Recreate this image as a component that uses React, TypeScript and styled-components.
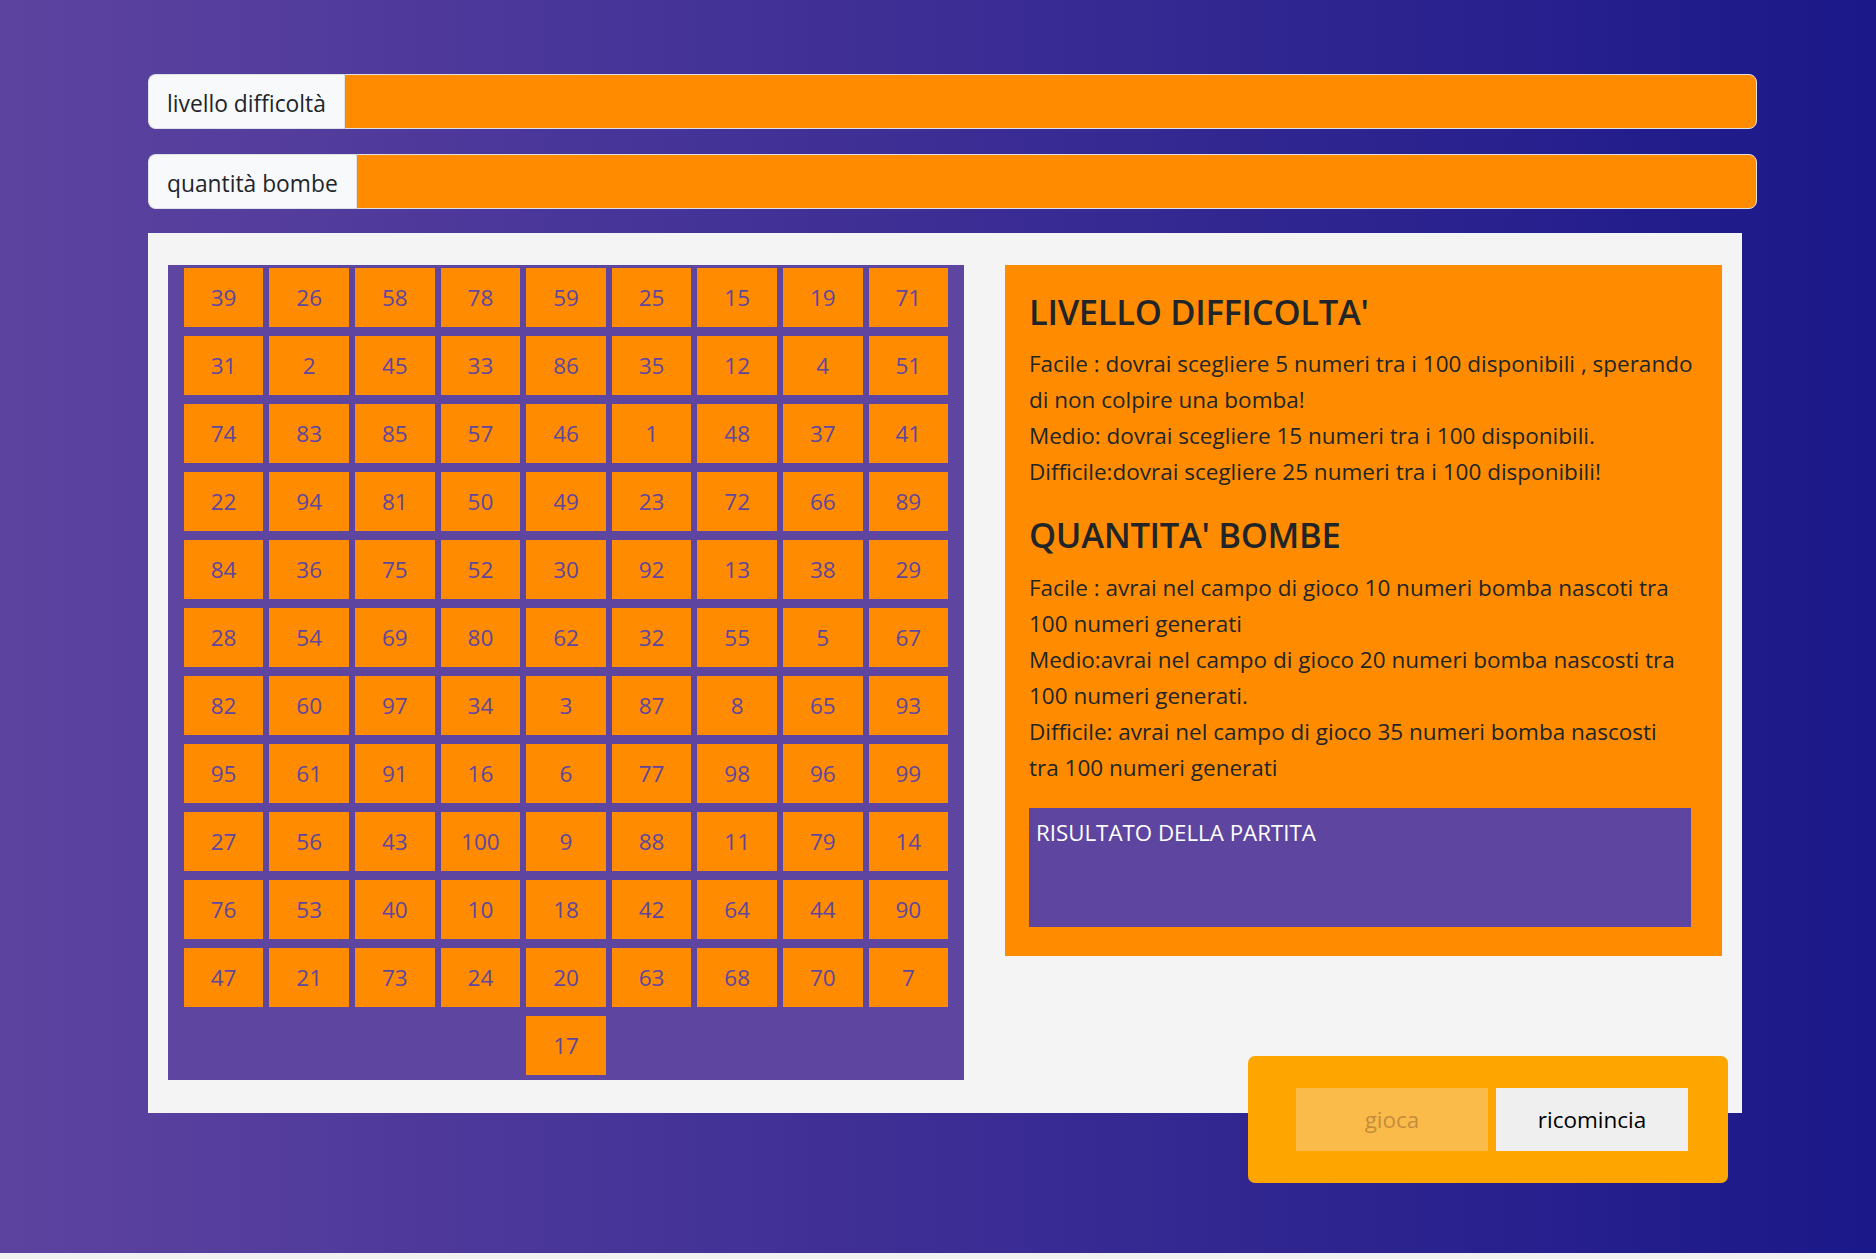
import React from "react";
import styled, { createGlobalStyle } from "styled-components";

const Global = createGlobalStyle`
  html, body { margin: 0; padding: 0; background: #f1f1f1; }
  body { font-family: "Open Sans", "Noto Sans", sans-serif; color: #212529; }
  * { box-sizing: border-box; }
`;

const Page = styled.div`
  min-height: 1253px;
  background: linear-gradient(to right, #5d43a0 0%, #1b1889 100%);
  padding: 74px 0 0 148px;
`;

const Column = styled.div`
  width: 1609px;
  display: flex;
  flex-direction: column;
`;

const InputGroup = styled.div<{ $mb: number }>`
  display: flex;
  height: 55px;
  margin-bottom: ${(p) => p.$mb}px;
`;

const Label = styled.div`
  display: flex;
  align-items: center;
  padding: 4px 18px 0 18px;
  background: #f8f9fa;
  border: 1px solid #dee2e6;
  border-right: none;
  border-radius: 8px 0 0 8px;
  font-size: 22.8px;
  color: #212529;
  white-space: nowrap;
`;

const Select = styled.div`
  flex: 1;
  background: #ff8c00;
  border: 1px solid #dee2e6;
  border-radius: 0 8px 8px 0;
`;

const Board = styled.div`
  width: 1594px;
  background: #f4f4f4;
  padding: 32px 20px 33px 20px;
  display: flex;
  gap: 41px;
  align-items: flex-start;
`;

const Grid = styled.div`
  width: 796px;
  background: #5e46a0;
  display: flex;
  flex-wrap: wrap;
  justify-content: center;
  align-content: flex-start;
  row-gap: 3px;
  padding-bottom: 2px;
`;

const Cell = styled.div`
  width: 10%;
  height: 59px;
  margin: 3px;
  background: #ff8c00;
  color: #5e46a0;
  font-size: 22.5px;
  display: flex;
  align-items: center;
  justify-content: center;
`;

const Info = styled.div`
  width: 717px;
  background: #ff8c00;
  padding: 25.5px 14px 29px 24px;
`;

const Heading = styled.h2<{ $mt?: number }>`
  margin: ${(p) => p.$mt ?? 0}px 0 14px;
  font-size: 34.5px;
  font-weight: 600;
  line-height: 1.2;
  letter-spacing: -0.3px;
  color: #212529;
`;

const Para = styled.div`
  font-size: 22.5px;
  line-height: 36px;
  color: #212529;
`;

const Result = styled.div`
  margin-top: 22px;
  width: 662px;
  height: 119px;
  background: #5e46a0;
  color: #ffffff;
  font-size: 22.3px;
  padding: 9px 7px;
`;

const ControlsRow = styled.div`
  width: 1594px;
  display: flex;
  justify-content: flex-end;
  padding-right: 14px;
  margin-top: -57px;
`;

const Controls = styled.div`
  width: 480px;
  background: #ffa500;
  border-radius: 7px;
  padding: 32px 40px 32px 48px;
  display: flex;
  gap: 8px;
`;

const Button = styled.button<{ $disabled?: boolean }>`
  width: 192px;
  height: 63px;
  border: none;
  font-family: "Open Sans", "Noto Sans", sans-serif;
  font-size: 22.5px;
  background: ${(p) => (p.$disabled ? "#fbbb4b" : "#efefef")};
  color: ${(p) => (p.$disabled ? "#c48d3d" : "#000000")};
  padding: 0;
`;

const numbers = [
  39, 26, 58, 78, 59, 25, 15, 19, 71,
  31, 2, 45, 33, 86, 35, 12, 4, 51,
  74, 83, 85, 57, 46, 1, 48, 37, 41,
  22, 94, 81, 50, 49, 23, 72, 66, 89,
  84, 36, 75, 52, 30, 92, 13, 38, 29,
  28, 54, 69, 80, 62, 32, 55, 5, 67,
  82, 60, 97, 34, 3, 87, 8, 65, 93,
  95, 61, 91, 16, 6, 77, 98, 96, 99,
  27, 56, 43, 100, 9, 88, 11, 79, 14,
  76, 53, 40, 10, 18, 42, 64, 44, 90,
  47, 21, 73, 24, 20, 63, 68, 70, 7,
  17,
];

export default function App() {
  return (
    <>
      <Global />
      <Page>
        <Column>
          <InputGroup $mb={25}>
            <Label>livello difficoltà</Label>
            <Select />
          </InputGroup>
          <InputGroup $mb={24}>
            <Label>quantità bombe</Label>
            <Select />
          </InputGroup>
          <Board>
            <Grid>
              {numbers.map((n) => (
                <Cell key={n}>{n}</Cell>
              ))}
            </Grid>
            <Info>
              <Heading>LIVELLO DIFFICOLTA'</Heading>
              <Para>
                <div>Facile : dovrai scegliere 5 numeri tra i 100 disponibili , sperando di non colpire una bomba!</div>
                <div>Medio: dovrai scegliere 15 numeri tra i 100 disponibili.</div>
                <div>Difficile:dovrai scegliere 25 numeri tra i 100 disponibili!</div>
              </Para>
              <Heading $mt={24.6}>QUANTITA' BOMBE</Heading>
              <Para>
                <div>Facile : avrai nel campo di gioco 10 numeri bomba nascoti tra 100 numeri generati</div>
                <div>Medio:avrai nel campo di gioco 20 numeri bomba nascosti tra 100 numeri generati.</div>
                <div>
                  Difficile: avrai nel campo di gioco 35 numeri bomba nascosti
                  <br />
                  tra 100 numeri generati
                </div>
              </Para>
              <Result>RISULTATO DELLA PARTITA</Result>
            </Info>
          </Board>
          <ControlsRow>
            <Controls>
              <Button $disabled>gioca</Button>
              <Button>ricomincia</Button>
            </Controls>
          </ControlsRow>
        </Column>
      </Page>
    </>
  );
}
